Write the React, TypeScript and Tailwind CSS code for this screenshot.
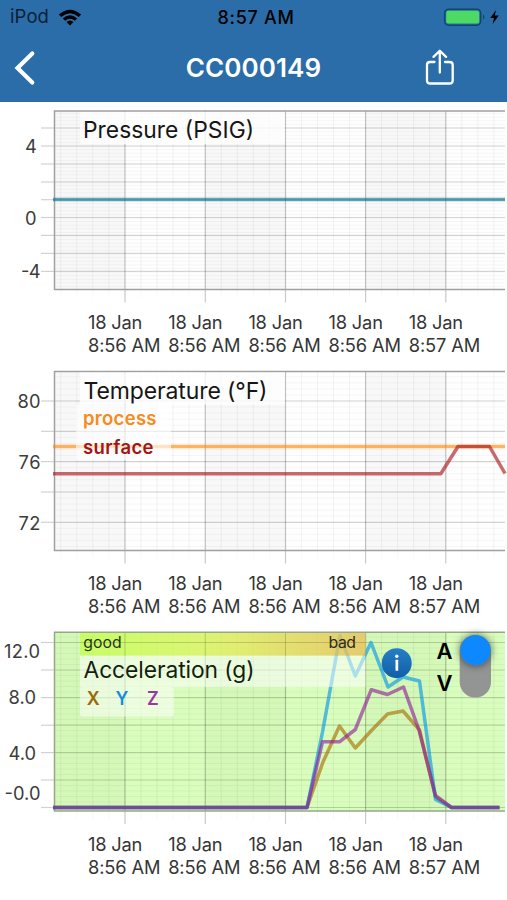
import type { ReactNode } from "react";

const FONT = "Inter, 'Liberation Sans', sans-serif";
const LEFT = 54.5;
const RIGHT = 505;
const MAJOR_X = [125, 205.3, 285.5, 365.6, 445.8];
const TIMES = ["8:56 AM", "8:56 AM", "8:56 AM", "8:56 AM", "8:57 AM"];

type Label = { text: string; right: number; baseline: number; width: number };

type ChartProps = {
  top: number;
  bottom: number;
  rows: number[];
  labels: Label[];
  green?: boolean;
  children: ReactNode;
};

function Txt(p: { x: number; y: number; w: number; size: number; fill: string; weight?: number; children: string }) {
  return (
    <text x={p.x} y={p.y} textLength={p.w} lengthAdjust="spacing" fontFamily={FONT} fontSize={p.size} fontWeight={p.weight ?? 400} fill={p.fill}>
      {p.children}
    </text>
  );
}

function Chart({ top, bottom, rows, labels, green, children }: ChartProps) {
  const step = (rows[1] - rows[0]) / 5;
  const minorY: number[] = [];
  for (let y = rows[0] - step * 5; y < bottom; y += step) if (y > top) minorY.push(y);
  const minorX: number[] = [];
  for (let x = MAJOR_X[0] - 64.2; x < RIGHT; x += 16.04) minorX.push(x);
  const edge = green ? "#93a989" : "#a0a0a0";
  return (
    <section className="flex h-[261px] flex-col">
      <svg className="block h-[206px] w-[507px] shrink-0" viewBox="0 0 507 206">
        <rect x={LEFT} y={top} width={RIGHT - LEFT} height={bottom - top} fill={green ? "#d9fdbd" : "#fefefe"} />
        {[[LEFT, 125], [205.3, 285.5], [365.6, 445.8]].map(([a, b]) => (
          <rect key={a} x={a} y={top} width={b - a} height={bottom - top} fill={green ? "#d4f8b8" : "#f8f8f8"} />
        ))}
        {minorY.map((y) => (
          <line key={y} x1={LEFT} x2={RIGHT} y1={y} y2={y} stroke="#000" strokeOpacity={0.035} />
        ))}
        {minorX.map((x) => (
          <g key={x}>
            <line x1={x} x2={x} y1={top} y2={bottom} stroke="#000" strokeOpacity={0.05} />
            <line x1={x} x2={x} y1={bottom} y2={bottom + 8} stroke="#000" strokeOpacity={0.03} />
          </g>
        ))}
        {rows.map((y) => (
          <g key={y}>
            <line x1={41} x2={LEFT} y1={y} y2={y} stroke="#d2d2d2" strokeWidth={1.2} />
            <line x1={LEFT} x2={RIGHT} y1={y} y2={y} stroke="#000" strokeOpacity={0.15} strokeWidth={1.2} />
          </g>
        ))}
        {MAJOR_X.map((x) => (
          <g key={x}>
            <line x1={x} x2={x} y1={top} y2={bottom} stroke="#000" strokeOpacity={0.2} strokeWidth={1.2} />
            <line x1={x} x2={x} y1={bottom} y2={bottom + 13} stroke="#cacaca" strokeWidth={1.2} />
          </g>
        ))}
        <path d={`M${RIGHT} ${top}H${LEFT}V${bottom}H${RIGHT}`} fill="none" stroke={edge} strokeWidth={1.5} />
        {labels.map((l) => (
          <Txt key={l.text} x={l.right - l.width} y={l.baseline} w={l.width} size={18.3} fill="#3c3c3c">
            {l.text}
          </Txt>
        ))}
        {children}
      </svg>
      <div className="mt-[3px] ml-[88px] flex text-[18.3px] leading-[23px] text-[#353535]">
        {TIMES.map((t, i) => (
          <div key={i} className="w-[80.2px] shrink-0 whitespace-nowrap">
            <div className="tracking-[-0.2px]">18 Jan</div>
            <div className="tracking-[-0.15px]">{t}</div>
          </div>
        ))}
      </div>
    </section>
  );
}

function Series({ points, color }: { points: string; color: string }) {
  return <polyline points={points} fill="none" stroke={color} strokeOpacity={0.62} strokeWidth={3.5} strokeLinejoin="round" />;
}

export default function App() {
  return (
    <div className="h-[900px] w-[507px] overflow-hidden bg-white font-[Inter,'Liberation_Sans',sans-serif]">
      <header className="h-[102px] bg-[#2a6da8]">
        <div className="grid h-[34px] grid-cols-3 items-center text-[18px] text-black">
          <div className="flex items-center gap-[9px] pl-[10px]">
            <span className="text-[18.5px] tracking-[0.1px] text-[#0c2135]">iPod</span>
            <svg className="h-[17px] w-[24px]" viewBox="0 0 24 17">
              <path d="M0.9 5.6Q12-4.2 23.1 5.6L20.8 7.9Q12 .7 3.2 7.9Z" />
              <path d="M4.8 9.4Q12 3.1 19.2 9.4L16.9 11.7Q12 7.7 7.1 11.7Z" />
              <path d="M8.5 13Q12 10 15.5 13L12 16.6Z" />
            </svg>
          </div>
          <span className="pl-[5px] text-center font-medium tracking-[0.7px]">8:57 AM</span>
          <div className="flex justify-end pr-[7px]">
            <svg className="h-[20px] w-[58px]" viewBox="442 7 58 20">
              <rect x="444.7" y="9.2" width="36" height="16" rx="4" fill="none" stroke="#12466f" strokeWidth="1.5" />
              <rect x="446.2" y="10.8" width="33" height="12.8" rx="2" fill="#4cd964" />
              <path d="M483 14.2Q485.8 17 483 19.8Z" fill="#12466f" />
              <path d="M496 10L490.3 18H494L492.6 24L498.8 15.6H494.8Z" />
            </svg>
          </div>
        </div>
        <div className="grid h-[67px] grid-cols-3 items-center">
          <svg className="ml-[12px] h-[40px] w-[26px]" viewBox="12 47.5 26 40">
            <path d="M32.3 53L17.5 67.5L32.3 82" fill="none" stroke="#fff" strokeWidth="4.2" strokeLinecap="round" />
          </svg>
          <h1 className="text-center text-[26px] font-semibold tracking-[0.1px] text-white">CC000149</h1>
          <svg className="ml-[84px] h-[40px] w-[36px]" viewBox="422 47.5 36 40">
            <g fill="none" stroke="#fff" strokeWidth="2.3" strokeLinecap="round" strokeLinejoin="round">
              <path d="M434.5 61.5H430Q427 61.5 427 64.5V80Q427 83 430 83H449.7Q452.7 83 452.7 80V64.5Q452.7 61.5 449.7 61.5H445" />
              <path d="M439.8 72V50.3M433.5 56.4L439.8 50.2L446.1 56.4" />
            </g>
          </svg>
        </div>
      </header>

      <Chart
        top={9}
        bottom={187.5}
        rows={[26, 44, 62, 80, 97.7, 115.5, 133.4, 151.4, 169.4]}
        labels={[
          { text: "4", right: 36.5, baseline: 50.6, width: 11.5 },
          { text: "0", right: 36.5, baseline: 122.6, width: 11.5 },
          { text: "-4", right: 40.5, baseline: 175.8, width: 19.5 },
        ]}
      >
        <rect x={80} y={10} width={205} height={32} fill="#fff" fillOpacity={0.75} />
        <Series points="53,97.5 505,97.5" color="#00708f" />
        <Txt x={83} y={35.5} w={171} size={22.8} fill="#161616">Pressure (PSIG)</Txt>
      </Chart>

      <Chart
        top={8.5}
        bottom={187.5}
        rows={[38, 68.3, 98.6, 129, 159.3]}
        labels={[
          { text: "80", right: 40.5, baseline: 45, width: 23 },
          { text: "76", right: 40.5, baseline: 106, width: 22 },
          { text: "72", right: 40.5, baseline: 166.6, width: 22 },
        ]}
      >
        <Series points="53,83.5 505,83.5" color="#ff8600" />
        <Series points="53,110.8 440.8,110.8 458,83.5 489.5,83.5 505,110.5" color="#a80e14" />
        <rect x={80} y={9.5} width={205} height={32} fill="#fff" fillOpacity={0.75} />
        <rect x={76} y={42} width={95} height={55} fill="#fff" fillOpacity={0.62} />
        <Txt x={83.5} y={35.5} w={184} size={23} fill="#161616">Temperature (°F)</Txt>
        <Txt x={83} y={62.3} w={73.5} size={18.5} weight={600} fill="#f98a1c">process</Txt>
        <Txt x={83} y={90.6} w={70.5} size={18.5} weight={600} fill="#a31515">surface</Txt>
      </Chart>

      <Chart
        green
        top={8.3}
        bottom={187}
        rows={[18.5, 46, 73.6, 101.2, 128.6, 156, 183.5]}
        labels={[
          { text: "12.0", right: 40, baseline: 33.5, width: 36 },
          { text: "8.0", right: 36, baseline: 80, width: 27.5 },
          { text: "4.0", right: 36, baseline: 135.5, width: 27.5 },
          { text: "-0.0", right: 40.5, baseline: 175.5, width: 36 },
        ]}
      >
        <defs>
          <linearGradient id="quality">
            <stop offset="0" stopColor="#c4ff50" />
            <stop offset="0.42" stopColor="#dcf35f" />
            <stop offset="0.55" stopColor="#e5ea5e" />
            <stop offset="1" stopColor="#e8bd58" />
          </linearGradient>
          <linearGradient id="infoFill" x2="0" y2="1">
            <stop offset="0" stopColor="#247fc5" />
            <stop offset="1" stopColor="#115fa8" />
          </linearGradient>
          <filter id="knobShadow" x="-50%" y="-50%" width="200%" height="200%">
            <feDropShadow dx="0" dy="0" stdDeviation="4" floodColor="#000" floodOpacity="0.65" />
          </filter>
        </defs>
        <Series points="53,183.5 307,183.5 323,138 339.5,102 355.3,124 371,107 387.5,90 403,87 419.5,106 435.5,173 451.5,183.5 499.5,183.5" color="#a76b00" />
        <Series points="53,183.5 307,183.5 322.5,108 340,11.5 355.3,52 371,18.5 388,63 403,53 419.5,57 435.5,175.5 451.5,183.5 499.5,183.5" color="#0095e5" />
        <Series points="53,183.5 307,183.5 322.5,117.8 339.5,117.8 355.3,105.5 371.3,65.7 387.5,70.5 403.5,63 419,106 435.5,171.5 451.5,183.5 499.5,183.5" color="#8f1d98" />
        <rect x={80} y={9} width={285.5} height={22.7} fill="url(#quality)" fillOpacity={0.78} />
        <rect x={80} y={31.7} width={285.5} height={31.3} fill="#fff" fillOpacity={0.52} />
        <rect x={80} y={63} width={94} height={29.5} rx={2} fill="#fff" fillOpacity={0.5} />
        <path d="M125 9V32M205.3 9V32M285.5 9V32M80 18.5H365" stroke="#000" strokeOpacity={0.12} />
        <Txt x={83.3} y={24} w={38.5} size={15.8} fill="#26351c">good</Txt>
        <Txt x={328.5} y={24} w={27.5} size={15.8} fill="#302b18">bad</Txt>
        <Txt x={83.5} y={54} w={171} size={22.8} fill="#141e10">Acceleration (g)</Txt>
        <Txt x={86.7} y={81} w={12} size={18} weight={600} fill="#986b08">X</Txt>
        <Txt x={115.5} y={81} w={12} size={18} weight={600} fill="#148cdd">Y</Txt>
        <Txt x={147} y={81} w={11.5} size={18} weight={600} fill="#9a37a2">Z</Txt>
        <circle cx={396.7} cy={39.2} r={15} fill="url(#infoFill)" />
        <circle cx={396.8} cy={32.2} r={1.7} fill="#fff" />
        <rect x={395.5} y={35.8} width={2.7} height={11} rx={0.5} fill="#fff" />
        <Txt x={436.5} y={35} w={15.5} size={22} weight={600} fill="#000">A</Txt>
        <Txt x={436.5} y={66.7} w={15.5} size={22} weight={600} fill="#000">V</Txt>
        <rect x={459.7} y={11} width={31.3} height={62.5} rx={15.6} fill="#939595" />
        <circle cx={475.5} cy={26.2} r={15} fill="#0a88ff" filter="url(#knobShadow)" />
      </Chart>
    </div>
  );
}
